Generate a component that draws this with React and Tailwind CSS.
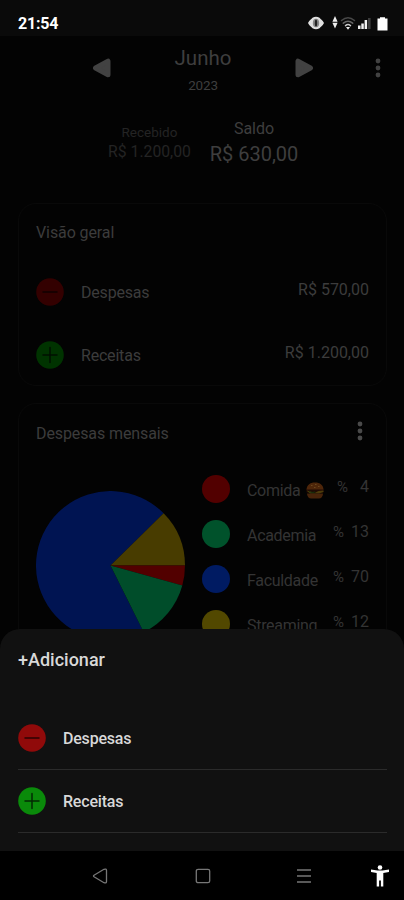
import React from "react";

const LEGEND = [
  { name: "Comida", pct: "4", dot: "bg-[#520000]", gap: "gap-[12px]", burger: true },
  { name: "Academia", pct: "13", dot: "bg-[#00522b]", gap: "gap-[7px]" },
  { name: "Faculdade", pct: "70", dot: "bg-[#001b62]", gap: "gap-[7px]" },
  { name: "Streaming", pct: "12", dot: "bg-[#524800]", gap: "gap-[7px]" },
];

const CX = 74.5;
const point = (deg) => {
  const a = (deg * Math.PI) / 180;
  return `${CX + CX * Math.cos(a)} ${CX + CX * Math.sin(a)}`;
};
const slice = (from, to) =>
  `M${CX} ${CX}L${point(from)}A${CX} ${CX} 0 ${to - from > 180 ? 1 : 0} 1 ${point(to)}Z`;

function StatusIcons() {
  return (
    <svg width="84" height="18" viewBox="306 14 84 18" className="block">
      <path d="M308 23c1.500-3 3.500-4 4.500-5.200q3.500-2.300 7 0c1 1.200 3 2.200 4.500 5.200c-1.500 3-3.500 4-4.500 5.200q-3.500 2.300-7 0c-1-1.200-3-2.200-4.500-5.200z" fill="#e0e0e0" />
      <ellipse cx="316" cy="23" rx="3.200" ry="4.300" fill="#888" />
      <ellipse cx="316" cy="23" rx="1.200" ry="3.600" fill="#222" />
      <path d="M335 16l2.600 5.800h-5.200zM335 28.500l2.600-5.800h-5.200z" fill="#eee" />
      <g fill="none" strokeWidth="1.500" strokeLinecap="round">
        <path d="M341.500 20.500q6.500-5.500 13 0" stroke="#484848" />
        <path d="M343.300 23.200q4.700-3.800 9.400 0" stroke="#666" />
        <path d="M345.500 25.600q2.500-2 5 0" stroke="#ccc" />
      </g>
      <path d="M346 27h4l-2 2.800z" fill="#eee" />
      <path d="M358 25.500h2.500v3.500h-2.500zM361.300 23.500h2.500v5.500h-2.500zM364.600 20h2.500v9h-2.500z" fill="#f0f0f0" />
      <path d="M368 18h2.600v11h-2.600z" fill="#3c3c3c" />
      <path d="M380 17.200h5v1.300h2.500v12h-10v-12h2.500z" fill="#fff" />
    </svg>
  );
}

function Kebab({ className }) {
  return (
    <svg width="6" height="20" viewBox="0 0 6 20" className={className}>
      <circle cx="3" cy="3" r="2.400" fill="currentColor" />
      <circle cx="3" cy="10" r="2.400" fill="currentColor" />
      <circle cx="3" cy="17" r="2.400" fill="currentColor" />
    </svg>
  );
}

function Badge({ plus, className }) {
  return (
    <svg width="28" height="28" viewBox="0 0 28 28" className={`shrink-0 ${className}`}>
      <circle cx="14" cy="14" r="13.800" fill="currentColor" />
      <path d={plus ? "M7 14h14M14 6.500v15" : "M7 14h14"} stroke="#000" strokeOpacity=".7" strokeWidth="1.500" strokeLinecap="round" />
    </svg>
  );
}

function Burger() {
  return (
    <svg width="18" height="17" viewBox="0 0 18 17" className="mt-px ml-[6px] block">
      <path d="M.5 8C.5 3 4 .5 9 .5S17.500 3 17.500 8z" fill="#4e260a" />
      <path d="M.5 7.500h17v3H.5z" fill="#210b04" />
      <path d="M.5 8.500l4 1 4 1.500 4-2 5-.5v1.500l-4.500 1.500H4z" fill="#4d3c0a" />
      <path d="M3 9.500l3 1 3-.5" stroke="#14300c" fill="none" />
      <path d="M1 11.500h16c0 3-2 5-4 5H5c-2 0-4-2-4-5z" fill="#48240a" />
      <path d="M5 3.500h1.500M9 2.500h1.500M12 4.500h1.500M8 5.500h1.500" stroke="#715022" strokeWidth=".8" />
    </svg>
  );
}

function OverviewRow({ plus, color, label, value }) {
  return (
    <div className="flex h-[63px] items-center text-[16px] leading-5 text-[#3c3c3c]">
      <Badge plus={plus} className={color} />
      <span className="mt-[2px] ml-[17px] tracking-[-0.2px]">{label}</span>
      <span className="mb-1 ml-auto">{value}</span>
    </div>
  );
}

function SheetRow({ plus, color, label }) {
  return (
    <div className="flex h-[63px] items-center border-b border-[#2b2b2b]">
      <Badge plus={plus} className={color} />
      <span className="mt-[2px] ml-[17px] text-[16px] leading-5 font-medium tracking-[-0.2px] text-[#d8d8d8]">{label}</span>
    </div>
  );
}

export default function App() {
  return (
    <div className="relative flex h-[900px] w-[404px] flex-col overflow-hidden bg-[#030303] font-[Roboto,sans-serif]">
      <div className="flex h-9 shrink-0 items-start justify-between bg-[#0a0a0a] pt-[14px] pr-[14px] pl-[18px]">
        <span className="text-[16px] leading-5 font-bold tracking-[-0.2px] text-white">21:54</span>
        <StatusIcons />
      </div>

      <header className="flex h-[72px] shrink-0 pr-[23px] pl-[92px]">
        <svg width="19" height="20" viewBox="0 0 19 20" className="mt-[22px]">
          <path d="M3.500 10L16 3.200V16.800Z" fill="#424242" stroke="#424242" strokeWidth="5" strokeLinejoin="round" />
        </svg>
        <div className="flex flex-1 flex-col items-center pt-[10px] text-[#3e3e3e]">
          <span className="text-[20.5px] leading-6">Junho</span>
          <span className="mt-[7px] text-[13.5px] leading-4 tracking-[-0.2px]">2023</span>
        </div>
        <svg width="19" height="20" viewBox="0 0 19 20" className="mt-[22px]">
          <path d="M15.500 10L3 3.200V16.800Z" fill="#424242" stroke="#424242" strokeWidth="5" strokeLinejoin="round" />
        </svg>
        <Kebab className="mt-[22px] ml-[61px] text-[#424242]" />
      </header>

      <div className="flex h-[95px] shrink-0 pl-[107px]">
        <div className="flex w-[85px] flex-col items-center pt-4 text-[#242424]">
          <span className="text-[13.5px] leading-4">Recebido</span>
          <span className="mt-[2px] text-[15.75px] leading-5 whitespace-nowrap">R$ 1.200,00</span>
        </div>
        <div className="ml-[17px] flex w-[90px] flex-col items-center pt-[11px] text-[#3e3e3e]">
          <span className="text-[16px] leading-5">Saldo</span>
          <span className="mt-[3px] text-[20px] leading-6 whitespace-nowrap">R$ 630,00</span>
        </div>
      </div>

      <section className="mr-[17px] ml-[18px] h-[183px] shrink-0 rounded-[18px] border border-[#090909] px-[17px] pt-[19px]">
        <h2 className="text-[16px] leading-5 tracking-[-0.1px] text-[#3c3c3c]">Visão geral</h2>
        <div className="mt-[17px]">
          <OverviewRow color="text-[#330000]" label="Despesas" value="R$ 570,00" />
          <OverviewRow plus color="text-[#003300]" label="Receitas" value="R$ 1.200,00" />
        </div>
      </section>

      <section className="mr-[17px] ml-[18px] mt-[17px] h-[300px] shrink-0 rounded-[18px] border border-[#090909] px-[17px] pt-[17px]">
        <div className="flex h-[46px] justify-between pr-[6px]">
          <h2 className="pt-[3px] text-[16px] leading-5 tracking-[-0.1px] text-[#3c3c3c]">Despesas mensais</h2>
          <Kebab className="text-[#4a4a4a]" />
        </div>
        <div className="flex">
          <svg width="149" height="149" viewBox="0 0 149 149" className="mt-[24px] shrink-0">
            <path d={slice(63.5, 315.5)} fill="#001452" />
            <path d={slice(315.5, 360)} fill="#483c00" />
            <path d={slice(0, 15.5)} fill="#520000" />
            <path d={slice(15.5, 63.5)} fill="#004d2a" />
          </svg>
          <div className="-mt-px ml-[17px] flex-1">
            {LEGEND.map((item) => (
              <div key={item.name} className="flex h-[45px] items-center text-[16px] leading-5 text-[#343434]">
                <span className={`size-7 shrink-0 rounded-full ${item.dot}`} />
                <span className="mt-[4px] ml-[17px] flex tracking-[-0.3px]">
                  {item.name}
                  {item.burger && <Burger />}
                </span>
                <span className={`mb-[3px] ml-auto flex ${item.gap}`}>
                  <span className="text-[15px]">%</span>
                  <span>{item.pct}</span>
                </span>
              </div>
            ))}
          </div>
        </div>
      </section>

      <div className="absolute inset-x-0 bottom-0 flex h-[271px] flex-col">
        <div className="flex-1 rounded-t-[20px] bg-[#111] pt-[19px] pr-[17px] pl-[18px]">
          <h2 className="text-[18px] leading-6 font-medium text-[#d8d8d8]">+Adicionar</h2>
          <div className="mt-[35px]">
            <SheetRow color="text-[#900a0a]" label="Despesas" />
            <SheetRow plus color="text-[#0a8a0a]" label="Receitas" />
          </div>
        </div>
        <nav className="flex h-[49px] items-center bg-black pl-[92px]">
          <svg width="16" height="16" viewBox="0 0 16 16" fill="none" stroke="#777" strokeWidth="1.300" strokeLinejoin="round">
            <path d="M2 7.200L12 1.300Q14.500 .5 14.500 2.500V13.500Q14.500 15.500 12 14.700L2 8.800Q1 8 2 7.200Z" />
          </svg>
          <svg width="16" height="16" viewBox="0 0 16 16" className="ml-[87px]" fill="none" stroke="#777" strokeWidth="1.300">
            <rect x="1.300" y="1.300" width="13.400" height="13.400" rx="1.800" />
          </svg>
          <svg width="16" height="16" viewBox="0 0 16 16" className="ml-[85px]" stroke="#777" strokeWidth="1.500">
            <path d="M1 2h14M1 8h14M1 14h14" />
          </svg>
          <svg width="20" height="24" viewBox="0 0 20 24" className="ml-[58px]" fill="#fff">
            <circle cx="10" cy="3.500" r="2.300" />
            <path d="M1 5.500L7.500 6.500H12.500L19 5.500V8L13.300 9V22.500H10.900V16.500H9.100V22.500H6.700V9L1 8Z" />
          </svg>
        </nav>
      </div>
    </div>
  );
}
